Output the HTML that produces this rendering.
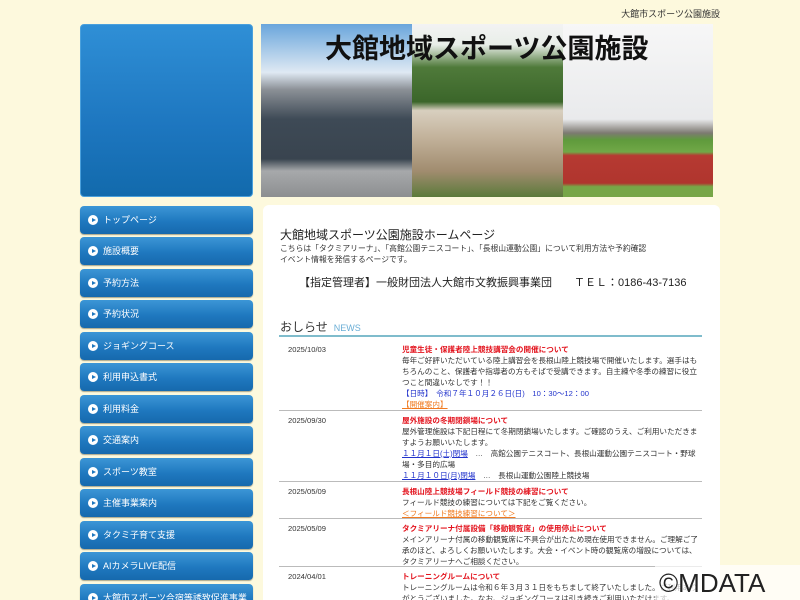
<!DOCTYPE html>
<html><head><meta charset="utf-8"><style>
*{margin:0;padding:0;box-sizing:border-box}
html,body{width:800px;height:600px;overflow:hidden}
body{background:#fdf9dd;font-family:"Liberation Sans","Noto Sans CJK JP",sans-serif;color:#333;position:relative}
.top{position:absolute;right:80px;top:7px;font-size:9px;color:#333}
.blue{position:absolute;left:80px;top:24px;width:173px;height:173px;border-radius:4px;background:linear-gradient(#2f8fd6,#1d76bf 60%,#126aac);border:1px solid #4aa0dc}
.hdr{position:absolute;left:261px;top:24px;width:452px;height:173px;overflow:hidden}
.p1{position:absolute;left:0;top:0;width:151px;height:173px;background:linear-gradient(#6aa6dc 0,#dfe9f3 28%,#8b9096 38%,#3e4a56 55%,#39444f 78%,#a7a9ab 85%,#8d8f91 100%)}
.p2{position:absolute;left:151px;top:0;width:151px;height:173px;background:linear-gradient(#f3f3f3 0,#e8eee8 12%,#4f7a3a 25%,#3b662a 45%,#d8cfbf 50%,#c3b39c 65%,#a18c6f 85%,#5b7a3a 100%)}
.p3{position:absolute;left:302px;top:0;width:150px;height:173px;background:linear-gradient(#f7f7f7 0,#e9eaec 55%,#7d7a72 63%,#5f9a3c 67%,#71a847 74%,#b63a32 76%,#b0352e 92%,#77a647 94%)}
.ht{position:absolute;left:64px;top:3px;font-size:27px;font-weight:bold;color:#111;white-space:nowrap}
.nav{position:absolute;left:80px;width:173px;height:28px;border-radius:4px;background:linear-gradient(#3c96d6,#1f78bf 55%,#1669ad);color:#fff;font-size:9px;line-height:28px;padding-left:23px;box-shadow:0 1px 1px #a9a58a}
.nav:before{content:"";position:absolute;left:8px;top:9px;width:10px;height:10px;border-radius:50%;background:#fff}
.nav:after{content:"";position:absolute;left:12px;top:11.5px;border-left:4px solid #1f78bf;border-top:2.5px solid transparent;border-bottom:2.5px solid transparent}
.main{position:absolute;left:263px;top:205px;width:457px;height:400px;background:#fff;border-radius:6px 6px 0 0}
.h1{position:absolute;left:17px;top:21px;font-size:12px;color:#222}
.intro{position:absolute;left:17px;top:38px;font-size:7.8px;line-height:11px;color:#333}
.mgr{position:absolute;left:36px;top:69px;font-size:11px;color:#222;white-space:nowrap}
.ns{position:absolute;left:17px;top:113px;font-size:12px;color:#333}
.ns span{font-size:9px;color:#6aaed6;margin-left:6px}
.rule{position:absolute;left:16px;top:130px;width:423px;height:2px;background:#7fbccc}
.item{position:absolute;left:16px;width:423px;border-bottom:1px solid #bbb;font-size:7.6px;line-height:11px}
.d{position:absolute;left:9px;top:4px;color:#333}
.c{margin-left:123px;padding:4px 0 3px;color:#333}
.t{color:#e3141e;font-weight:bold}
.b{color:#2233cc}
.o{color:#f07a20;text-decoration:underline}
.l{color:#2233cc;text-decoration:underline}
.wm{position:absolute;left:655px;top:565px;width:145px;height:35px;background:rgba(255,255,255,.7);font-size:26px;color:#222;line-height:36px;padding-left:4px}
</style></head><body>
<div class="top">大館市スポーツ公園施設</div>
<div class="blue"></div>
<div class="hdr"><div class="p1"></div><div class="p2"></div><div class="p3"></div><div class="ht">大館地域スポーツ公園施設</div></div>
<div class="nav" style="top:206px">トップページ</div>
<div class="nav" style="top:237px">施設概要</div>
<div class="nav" style="top:269px">予約方法</div>
<div class="nav" style="top:300px">予約状況</div>
<div class="nav" style="top:332px">ジョギングコース</div>
<div class="nav" style="top:363px">利用申込書式</div>
<div class="nav" style="top:395px">利用料金</div>
<div class="nav" style="top:426px">交通案内</div>
<div class="nav" style="top:458px">スポーツ教室</div>
<div class="nav" style="top:489px">主催事業案内</div>
<div class="nav" style="top:521px">タクミ子育て支援</div>
<div class="nav" style="top:552px">AIカメラLIVE配信</div>
<div class="nav" style="top:584px">大館市スポーツ合宿等誘致促進事業</div>
<div class="main">
<div class="h1">大館地域スポーツ公園施設ホームページ</div>
<div class="intro">こちらは「タクミアリーナ」、「高館公園テニスコート」、「長根山運動公園」について利用方法や予約確認<br>イベント情報を発信するページです。</div>
<div class="mgr">【指定管理者】一般財団法人大館市文教振興事業団　　ＴＥＬ：0186-43-7136</div>
<div class="ns">おしらせ<span>NEWS</span></div>
<div class="rule"></div>
<div class="item" style="top:135px;height:71px"><div class="d">2025/10/03</div><div class="c"><span class="t">児童生徒・保護者陸上競技講習会の開催について</span><br>毎年ご好評いただいている陸上講習会を長根山陸上競技場で開催いたします。選手はもちろんのこと、保護者や指導者の方もそばで受講できます。自主練や冬季の練習に役立つこと間違いなしです！！<br><span class="b">【日時】　令和７年１０月２６日(日)　10：30〜12：00</span><br><span class="o">【開催案内】</span></div></div>
<div class="item" style="top:206px;height:71px"><div class="d">2025/09/30</div><div class="c"><span class="t">屋外施設の冬期閉鎖場について</span><br>屋外管理施設は下記日程にて冬期閉鎖場いたします。ご確認のうえ、ご利用いただきますようお願いいたします。<br><span class="l">１１月１日(土)閉場</span>　…　高館公園テニスコート、長根山運動公園テニスコート・野球場・多目的広場<br><span class="l">１１月１０日(月)閉場</span>　…　長根山運動公園陸上競技場</div></div>
<div class="item" style="top:277px;height:37px"><div class="d">2025/05/09</div><div class="c"><span class="t">長根山陸上競技場フィールド競技の練習について</span><br>フィールド競技の練習については下記をご覧ください。<br><span class="o">＜フィールド競技練習について＞</span></div></div>
<div class="item" style="top:314px;height:48px"><div class="d">2025/05/09</div><div class="c"><span class="t">タクミアリーナ付属設備「移動観覧席」の使用停止について</span><br>メインアリーナ付属の移動観覧席に不具合が出たため現在使用できません。ご理解ご了承のほど、よろしくお願いいたします。大会・イベント時の観覧席の増設については、タクミアリーナへご相談ください。</div></div>
<div class="item" style="top:362px;height:60px;border:none"><div class="d">2024/04/01</div><div class="c"><span class="t">トレーニングルームについて</span><br>トレーニングルームは令和６年３月３１日をもちまして終了いたしました。ご利用ありがとうございました。なお、ジョギングコースは引き続きご利用いただけます。</div></div>
</div>
<div class="wm">©MDATA</div>
</body></html>
